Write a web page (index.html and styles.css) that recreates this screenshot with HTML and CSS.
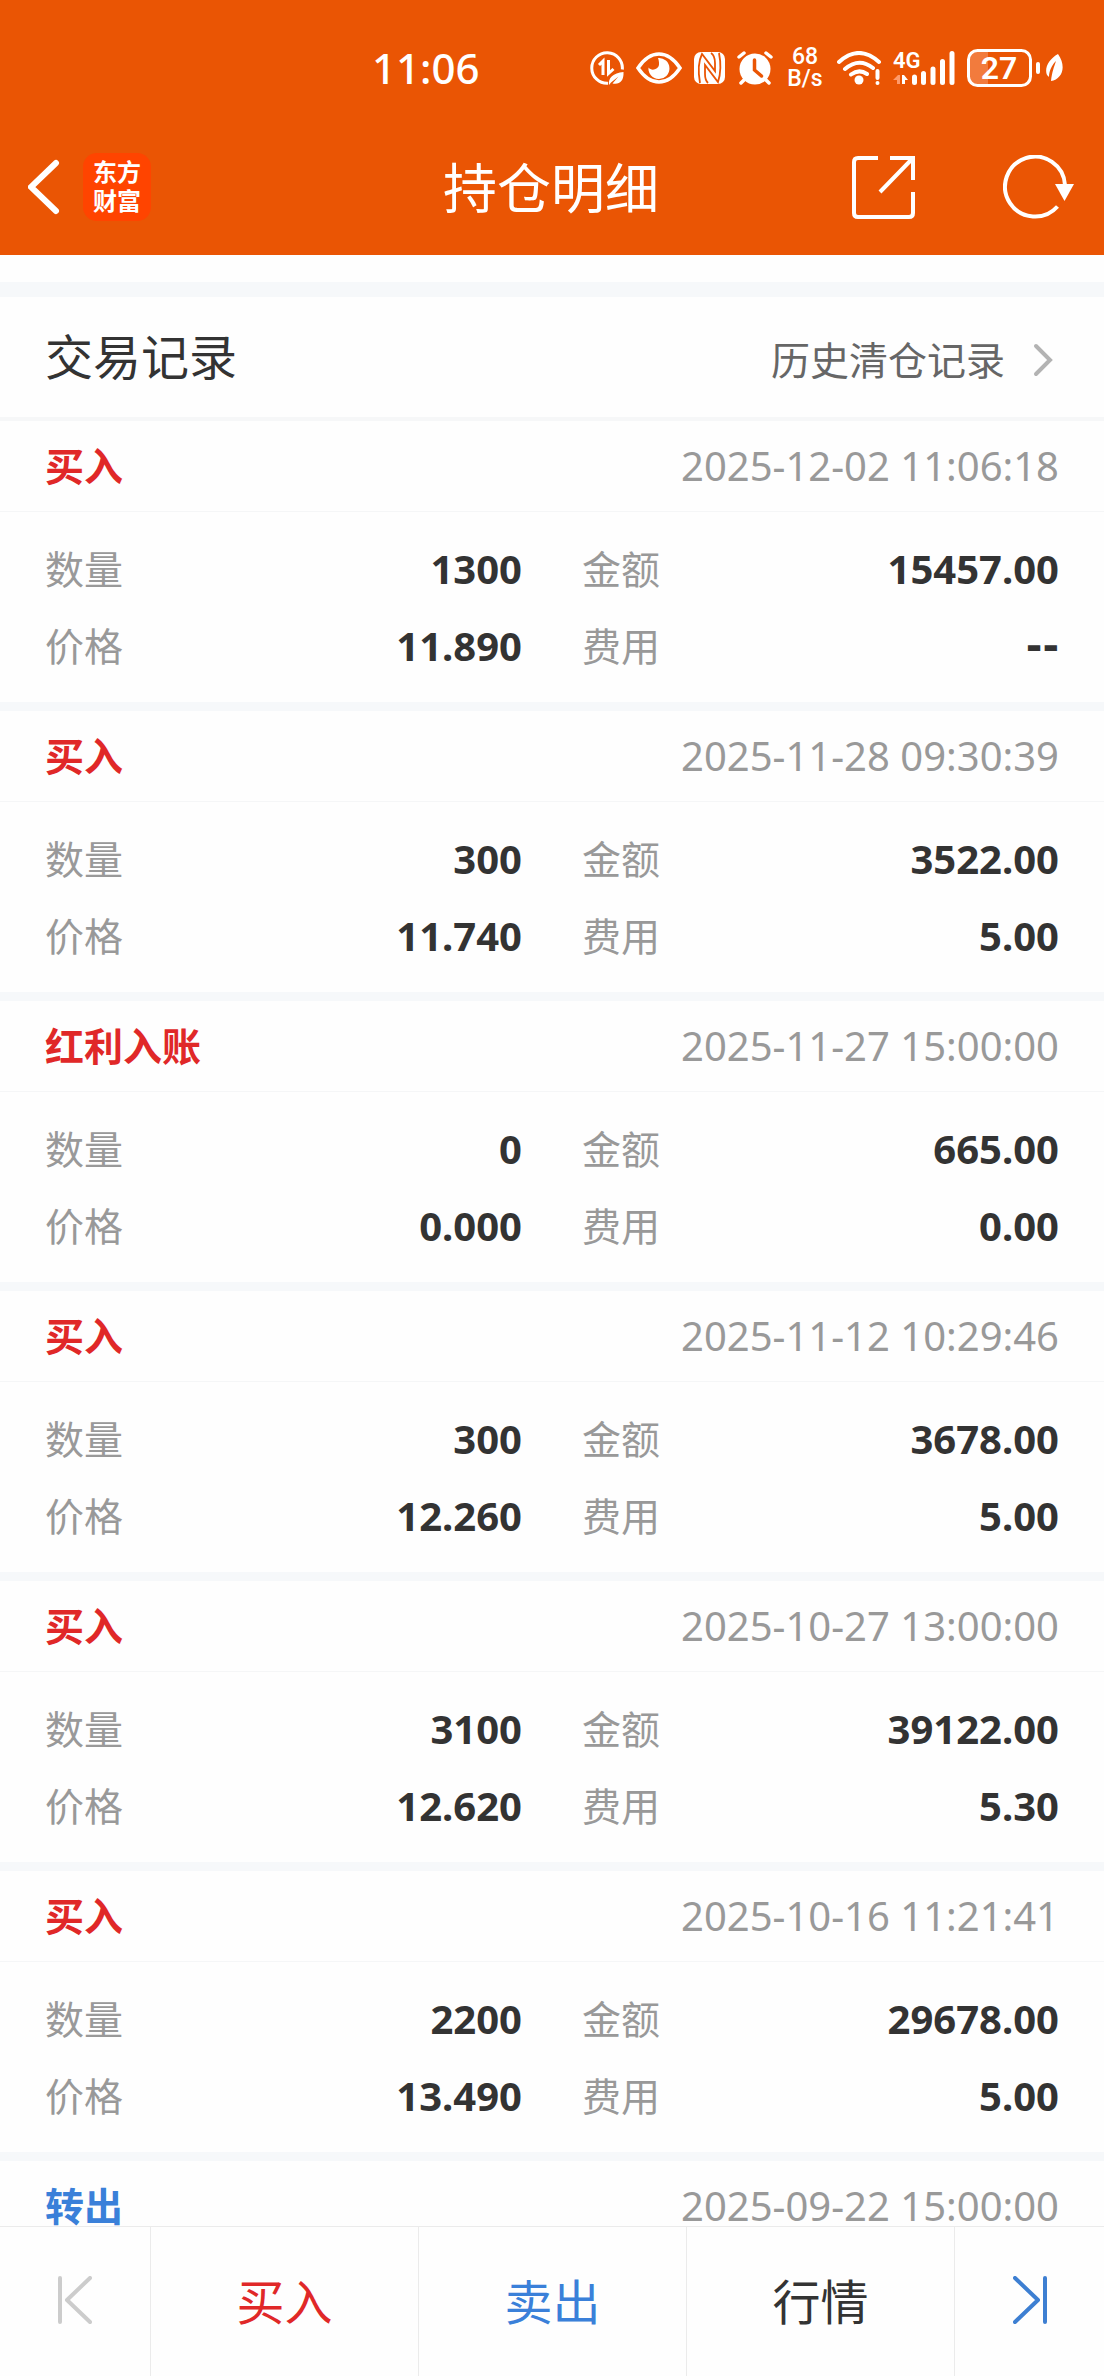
FILE: index.html
```html
<!DOCTYPE html>
<html lang="zh-CN">
<head>
<meta charset="utf-8">
<meta name="viewport" content="width=device-width, initial-scale=1">
<title>持仓明细</title>
<link rel="stylesheet" href="styles.css">
</head>
<body>
<header class="top">
  <div class="status">
    <time class="clock">11:06</time>
    <div class="status-icons">
      <svg width="34" height="34" viewBox="0 0 34 34" fill="none" stroke="#fff" stroke-width="3">
        <path d="M18 32.3A15.3 15.3 0 1 1 32.3 18.500"/>
        <path d="M9 14l4-4v14M18.500 9v13.500l5-4.500" stroke-width="3"/>
        <path d="M19 34c-1-7 4-12 14.500-13 .5 9-4 13-11 11.500l6-7-7.500 6z" fill="#fff" stroke="none"/>
      </svg>
      <svg width="46" height="32" viewBox="0 0 46 32" fill="none" stroke="#fff">
        <path d="M2 16C8 7 15 2 23 2s15 5 21 14c-6 9-13 14-21 14S8 25 2 16z" stroke-width="3.500"/>
        <path d="M22 6a10.500 10.500 0 1 1-9.500 9.500c3 4 10 2 10.500-3 .2-3-.5-5-1-6.500z" fill="#fff" stroke="none"/>
      </svg>
      <svg width="31" height="32" viewBox="0 0 31 32">
        <rect width="31" height="32" rx="7" fill="#fff"/>
        <path d="M6 31C4 20 4 10 8 2l13 17v-8c0-5-1-8-4-10M25 1c2 10 2 20-1 29L11 13v9c0 5 1 7 3 9" fill="none" stroke="#ea5504" stroke-width="1.800"/>
      </svg>
      <svg width="36" height="34" viewBox="0 0 36 34" fill="none" stroke="#fff" stroke-width="3.500" stroke-linecap="round">
        <circle cx="18" cy="18" r="15.500" fill="#fff" stroke="none"/>
        <path d="M2 6l5-4M34 6l-5-4M8 28l-4 4M28 28l4 4"/>
        <path d="M17.500 9v10l7 6" stroke="#ea5504" stroke-width="3.500"/>
      </svg>
      <span class="net-speed">68<br>B/s</span>
      <svg width="44" height="34" viewBox="0 0 44 34" fill="none" stroke="#fff" stroke-width="4" stroke-linecap="round">
        <path d="M2 11q20-18 40 0M8 18q14-12 28-1M14 23.500q8-6 16-.5"/>
        <circle cx="22" cy="29" r="4.500" fill="#fff" stroke="none"/>
        <path d="M40.500 20v7M40.500 32v0"/>
      </svg>
      <svg class="signal" width="62" height="34" viewBox="0 0 62 34">
        <text x="0" y="17" font-size="22">4G</text>
        <path d="M0 29l5-5h2v9H4v-4z" fill="#ff9a6b"/>
        <path d="M9 24h2l4 5v0h-3v4H9z" fill="#fff"/>
        <path d="M21.500 26v5.500M30.500 22.500v9M40 18v13.500M49.500 10.500v21M59 2.500v29" stroke="#fff" stroke-width="5" stroke-linecap="round"/>
      </svg>
      <svg class="battery" width="97" height="38" viewBox="0 0 97 38">
        <path d="M21 2H11Q2 2 2 11v16q0 9 9 9h10z" fill="#f27b3d"/>
        <rect x="1.500" y="1.500" width="62" height="35" rx="9" fill="none" stroke="#fff" stroke-width="3"/>
        <rect x="69" y="13" width="4" height="12" rx="2" fill="#fff"/>
        <text x="32" y="30" font-size="32" text-anchor="middle">27</text>
        <path d="M91 5c-9 5-14 14-11 21l2 2c0-6 3-12 7-16-2 6-4 11-5 20 11-2 16-14 7-27z" fill="#fff"/>
      </svg>
    </div>
  </div>
  <div class="titlebar">
    <div class="title-left">
      <button class="icon-btn" aria-label="返回">
        <svg width="32" height="56" viewBox="0 0 32 56" fill="none" stroke="#fff" stroke-width="6" stroke-linecap="round"><path d="M28 4L3 28l25 24"/></svg>
      </button>
      <a class="logo" href="#">东方<br>财富</a>
    </div>
    <h1 class="title">持仓明细</h1>
    <div class="title-right">
      <button class="icon-btn" aria-label="分享">
        <svg width="63" height="63" viewBox="0 0 63 63" fill="none" stroke="#fff" stroke-width="4"><path d="M26 2H6Q2 2 2 6v51q0 4 4 4h51q4 0 4-4V36M38 2h23v22M60 3L28 36"/></svg>
      </button>
      <button class="icon-btn" aria-label="刷新">
        <svg width="71" height="64" viewBox="0 0 71 64" fill="none" stroke="#fff" stroke-width="4"><path d="M62 30A30 30 0 1 0 54.500 51.500"/><path d="M52 29h19l-9.500 17z" fill="#fff" stroke="none"/></svg>
      </button>
    </div>
  </div>
</header>

<main class="content">
  <section class="section-head">
    <h2 class="section-title">交易记录</h2>
    <a class="history" href="#">历史清仓记录
      <svg width="20" height="34" viewBox="0 0 20 34" fill="none" stroke="#b3b3b3" stroke-width="4" stroke-linecap="round"><path d="M3 3l14 14L3 31"/></svg>
    </a>
  </section>

  <article class="record">
    <div class="record-head"><h3 class="kind buy">买入</h3><time class="when">2025-12-02 11:06:18</time></div>
    <dl class="fields">
      <div class="field"><dt>数量</dt><dd>1300</dd></div>
      <div class="field"><dt>金额</dt><dd>15457.00</dd></div>
      <div class="field"><dt>价格</dt><dd>11.890</dd></div>
      <div class="field"><dt>费用</dt><dd class="empty">--</dd></div>
    </dl>
  </article>

  <article class="record">
    <div class="record-head"><h3 class="kind buy">买入</h3><time class="when">2025-11-28 09:30:39</time></div>
    <dl class="fields">
      <div class="field"><dt>数量</dt><dd>300</dd></div>
      <div class="field"><dt>金额</dt><dd>3522.00</dd></div>
      <div class="field"><dt>价格</dt><dd>11.740</dd></div>
      <div class="field"><dt>费用</dt><dd>5.00</dd></div>
    </dl>
  </article>

  <article class="record">
    <div class="record-head"><h3 class="kind buy">红利入账</h3><time class="when">2025-11-27 15:00:00</time></div>
    <dl class="fields">
      <div class="field"><dt>数量</dt><dd>0</dd></div>
      <div class="field"><dt>金额</dt><dd>665.00</dd></div>
      <div class="field"><dt>价格</dt><dd>0.000</dd></div>
      <div class="field"><dt>费用</dt><dd>0.00</dd></div>
    </dl>
  </article>

  <article class="record">
    <div class="record-head"><h3 class="kind buy">买入</h3><time class="when">2025-11-12 10:29:46</time></div>
    <dl class="fields">
      <div class="field"><dt>数量</dt><dd>300</dd></div>
      <div class="field"><dt>金额</dt><dd>3678.00</dd></div>
      <div class="field"><dt>价格</dt><dd>12.260</dd></div>
      <div class="field"><dt>费用</dt><dd>5.00</dd></div>
    </dl>
  </article>

  <article class="record">
    <div class="record-head"><h3 class="kind buy">买入</h3><time class="when">2025-10-27 13:00:00</time></div>
    <dl class="fields">
      <div class="field"><dt>数量</dt><dd>3100</dd></div>
      <div class="field"><dt>金额</dt><dd>39122.00</dd></div>
      <div class="field"><dt>价格</dt><dd>12.620</dd></div>
      <div class="field"><dt>费用</dt><dd>5.30</dd></div>
    </dl>
  </article>

  <article class="record">
    <div class="record-head"><h3 class="kind buy">买入</h3><time class="when">2025-10-16 11:21:41</time></div>
    <dl class="fields">
      <div class="field"><dt>数量</dt><dd>2200</dd></div>
      <div class="field"><dt>金额</dt><dd>29678.00</dd></div>
      <div class="field"><dt>价格</dt><dd>13.490</dd></div>
      <div class="field"><dt>费用</dt><dd>5.00</dd></div>
    </dl>
  </article>

  <article class="record">
    <div class="record-head"><h3 class="kind sell">转出</h3><time class="when">2025-09-22 15:00:00</time></div>
  </article>
</main>

<nav class="bottom">
  <button class="tab tab-step" aria-label="上一只" disabled>
    <svg width="34" height="48" viewBox="0 0 34 48" fill="none" stroke="#ccc" stroke-width="4" stroke-linecap="round" stroke-linejoin="round"><path d="M2 2v44M32 2L9 24l23 22"/></svg>
  </button>
  <button class="tab buy">买入</button>
  <button class="tab sell">卖出</button>
  <button class="tab">行情</button>
  <button class="tab tab-step" aria-label="下一只">
    <svg width="34" height="48" viewBox="0 0 34 48" fill="none" stroke="#3d7fd2" stroke-width="4" stroke-linecap="round" stroke-linejoin="round"><path d="M32 2v44M2 2l23 22L2 46"/></svg>
  </button>
</nav>
</body>
</html>
```
FILE: styles.css
```css
* {
  box-sizing: border-box;
}

body {
  margin: 0;
  height: 100vh;
  display: flex;
  flex-direction: column;
  background: #fefefe;
  color: #333;
  font-family: "Noto Sans", "Noto Sans CJK SC", sans-serif;
}

h1, h2, h3, dl, dt, dd {
  margin: 0;
  font-weight: 400;
}

button {
  border: 0;
  padding: 0;
  background: none;
  color: inherit;
  font-family: inherit;
}

a {
  color: inherit;
  text-decoration: none;
}

svg {
  display: block;
}

.buy {
  color: #e02828;
}

.sell {
  color: #3a80d9;
}

/* Header */
.top {
  flex: none;
  background: #ea5504;
  color: #fff;
}

.status {
  height: 136px;
  padding: 0 40px 0 372px;
  display: flex;
  align-items: center;
  justify-content: space-between;
}

.clock {
  font-size: 42px;
  line-height: 60px;
  font-weight: 500;
}

.status-icons {
  display: flex;
  align-items: center;
  gap: 12px;
}

.net-speed {
  width: 40px;
  font-family: Roboto, sans-serif;
  font-size: 23px;
  line-height: 22px;
  font-weight: 500;
  text-align: center;
}

.signal,
.battery {
  fill: #fff;
  font-family: Roboto, sans-serif;
  font-weight: 600;
}

.titlebar {
  height: 119px;
  padding: 0 30px 17px 28px;
  display: grid;
  grid-template-columns: 1fr auto 1fr;
  align-items: center;
}

.title-left,
.title-right {
  display: flex;
  align-items: center;
}

.title-left {
  gap: 23px;
}

.title-right {
  justify-content: flex-end;
  gap: 88px;
}

.logo {
  width: 68px;
  height: 68px;
  padding-top: 4px;
  border-radius: 14px;
  background: #ff4400;
  font-size: 24px;
  line-height: 29px;
  font-weight: 700;
  text-align: center;
}

.title {
  padding-top: 2px;
  font-size: 54px;
  line-height: 80px;
}

/* Section heading */
.content {
  flex: 1;
  min-height: 0;
  overflow-y: auto;
  scrollbar-width: none;
  padding-top: 27px;
}

.section-head {
  height: 139px;
  padding: 0 51px 0 45px;
  border-top: 15px solid #f6f8fa;
  border-bottom: 4px solid #f6f7f8;
  display: flex;
  align-items: center;
  justify-content: space-between;
}

.section-title {
  font-size: 48px;
  line-height: 72px;
}

.history {
  padding-top: 5px;
  display: flex;
  align-items: center;
  gap: 28px;
  color: #666;
  font-size: 39px;
  line-height: 60px;
}

/* Records */
.record {
  border-bottom: 9px solid #f6f8fa;
}

.record:last-child {
  border-bottom: 0;
}

.record-head {
  height: 91px;
  padding: 0 45px;
  border-bottom: 1px solid #f5f6f7;
  display: flex;
  align-items: center;
  justify-content: space-between;
}

.kind {
  font-size: 39px;
  line-height: 60px;
  font-weight: 700;
}

.when {
  color: #999;
  font-size: 40px;
  line-height: 60px;
}

.fields {
  padding: 18px 45px;
  display: grid;
  grid-template-columns: 1fr 1fr;
  column-gap: 60px;
}

.field {
  height: 77px;
  display: flex;
  align-items: center;
  justify-content: space-between;
}

.field dt {
  color: #999;
  font-size: 39px;
  line-height: 60px;
}

.field dd {
  font-size: 40px;
  line-height: 60px;
  font-weight: 700;
}

.field .empty {
  font-family: "DejaVu Sans", sans-serif;
}

/* Bottom bar */
.bottom {
  flex: none;
  height: 150px;
  border-top: 1px solid #ebebeb;
  background: #fefefe;
  display: grid;
  grid-template-columns: 150px 1fr 1fr 1fr 150px;
}

.tab {
  display: flex;
  align-items: center;
  justify-content: center;
  font-size: 48px;
  line-height: 72px;
}

.tab-step {
  padding-bottom: 4px;
}

.tab + .tab {
  border-left: 1px solid #ebebeb;
}
```
